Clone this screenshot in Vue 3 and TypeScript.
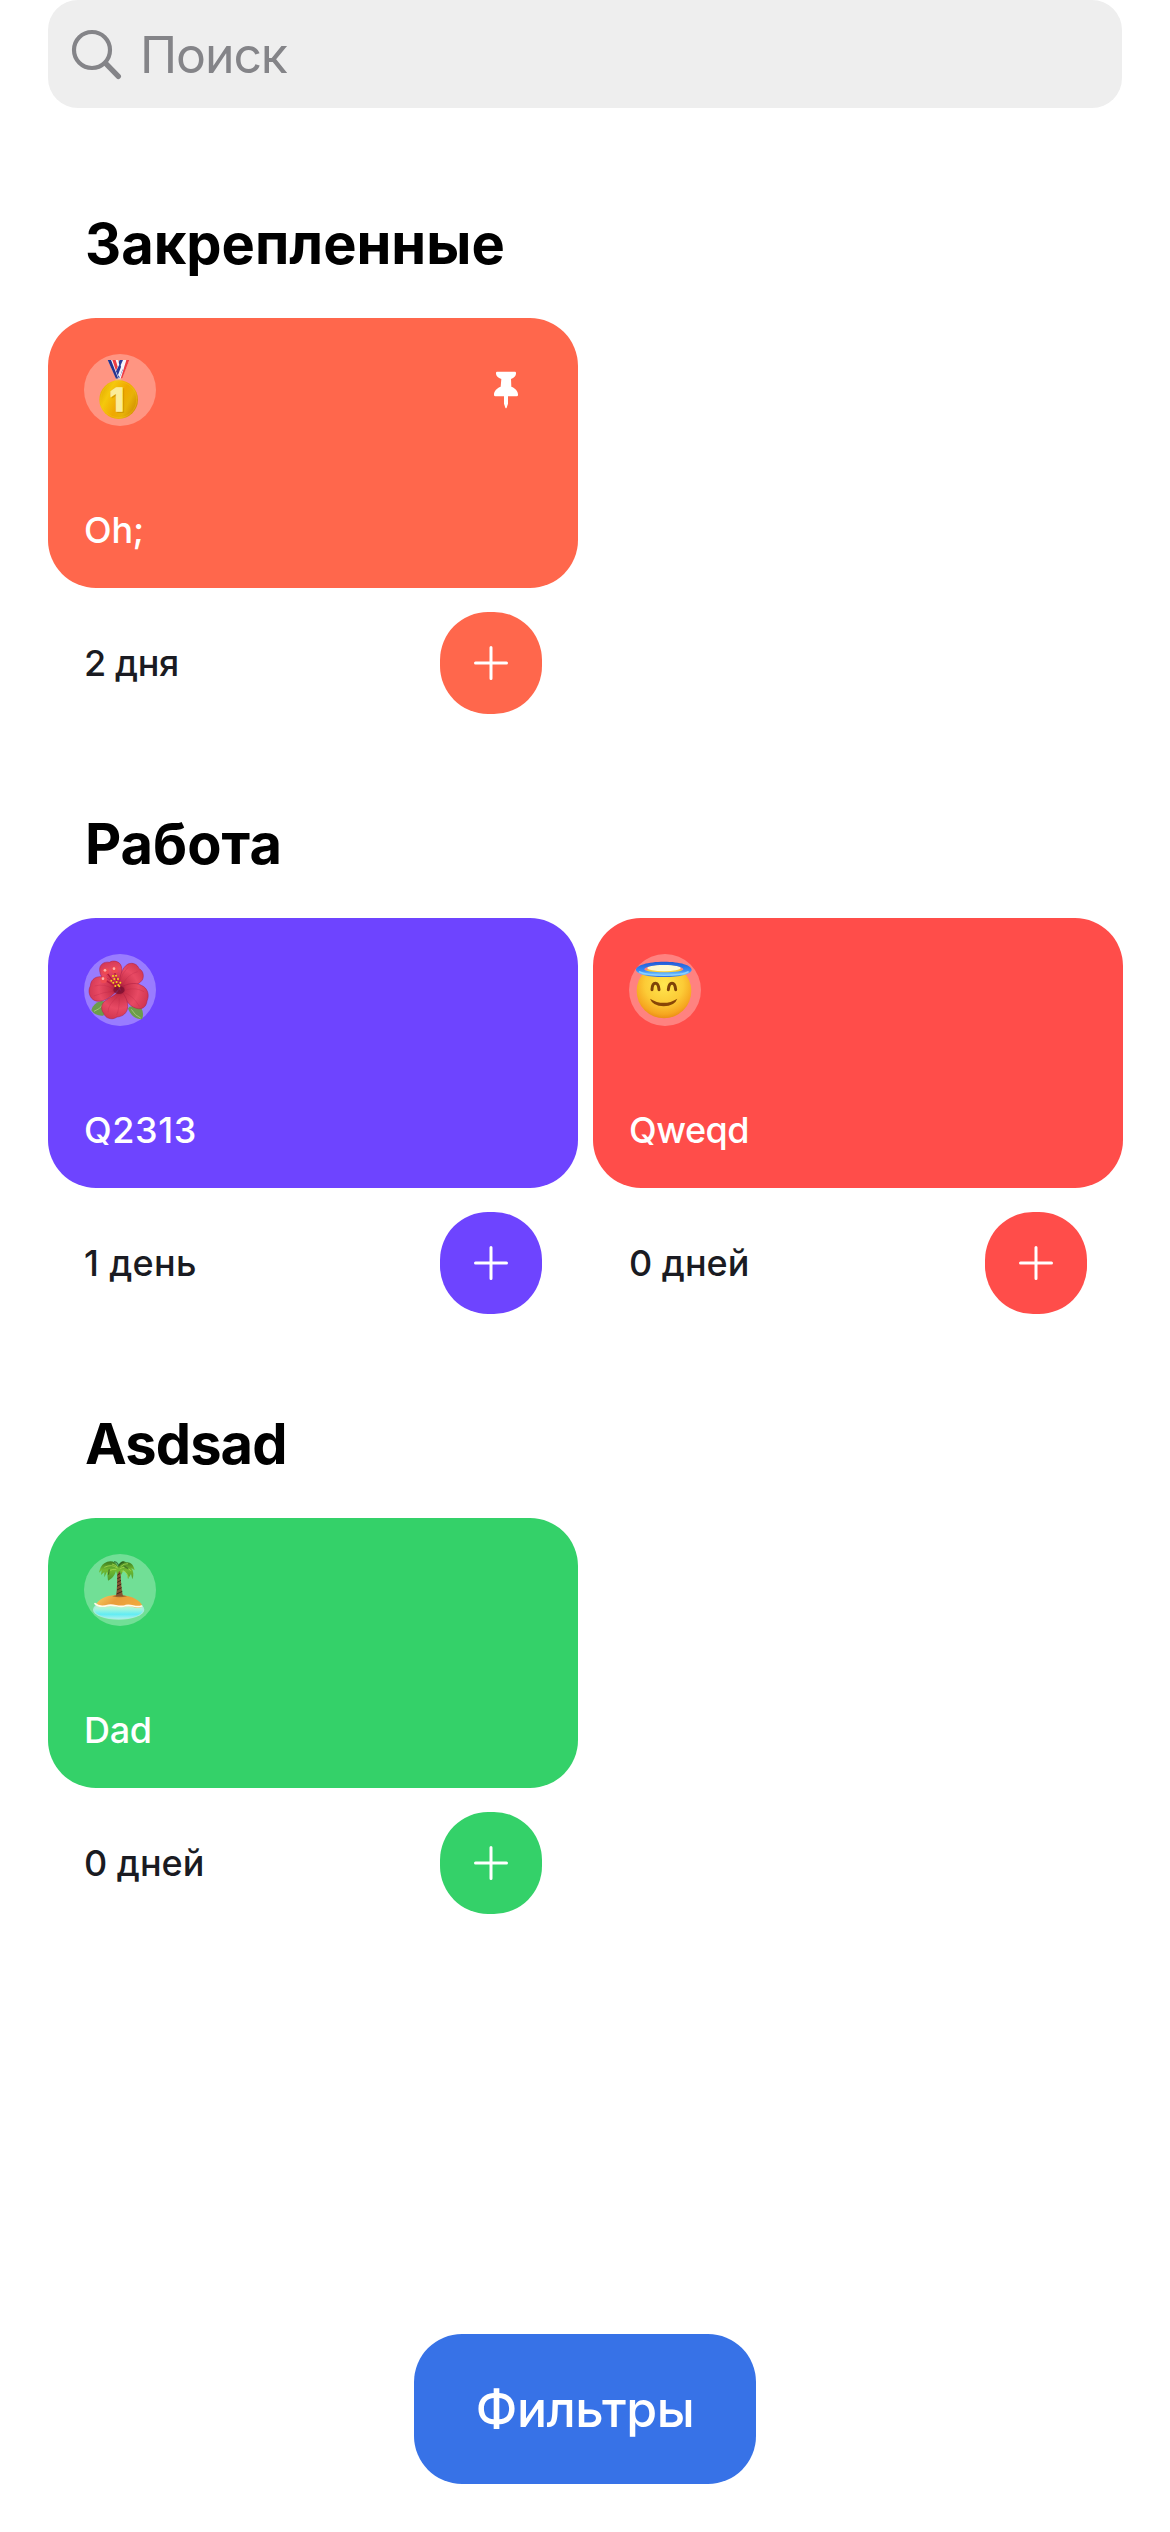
<script setup lang="ts">
type EmojiName = 'medal' | 'flower' | 'angel' | 'island'

interface Habit {
  title: string
  days: string
  color: string
  emoji: EmojiName
  pinned?: boolean
  titleSpacing: number
  daysSpacing: number
}

interface Group {
  name: string
  spacing: number
  habits: Habit[]
}

const groups: Group[] = [
  {
    name: 'Закрепленные',
    spacing: 0,
    habits: [
      { title: 'Oh;', days: '2 дня', color: '#ff674c', emoji: 'medal', pinned: true, titleSpacing: -0.2, daysSpacing: -0.4 },
    ],
  },
  {
    name: 'Работа',
    spacing: 0,
    habits: [
      { title: 'Q2313', days: '1 день', color: '#6e44ff', emoji: 'flower', titleSpacing: 0.6, daysSpacing: 0.3 },
      { title: 'Qweqd', days: '0 дней', color: '#ff4d4a', emoji: 'angel', titleSpacing: -0.5, daysSpacing: 0 },
    ],
  },
  {
    name: 'Asdsad',
    spacing: -0.9,
    habits: [
      { title: 'Dad', days: '0 дней', color: '#34d169', emoji: 'island', titleSpacing: -0.3, daysSpacing: 0 },
    ],
  },
]
</script>

<template>
  <main class="screen">
    <div class="search">
      <svg class="search-icon" viewBox="210 84 156 156" fill="none" stroke="#848488" stroke-linecap="round">
        <circle cx="276" cy="150" r="54" stroke-width="12.5" />
        <path d="M317 190 355 229" stroke-width="16" />
      </svg>
      <span class="search-text">Поиск</span>
    </div>

    <div class="groups">
      <section v-for="group in groups" :key="group.name">
        <h2 :style="{ letterSpacing: group.spacing + 'px' }">{{ group.name }}</h2>
        <div class="row">
          <article v-for="habit in group.habits" :key="habit.title" class="habit">
            <div class="card" :style="{ backgroundColor: habit.color }">
              <div class="card-top">
                <div class="emoji">
                  <svg v-if="habit.emoji === 'medal'" viewBox="42 42 216 216">
                    <defs>
                      <linearGradient id="gold" x1="0" y1="0.2" x2="1" y2="0.7">
                        <stop offset="0" stop-color="#e0a800" />
                        <stop offset="0.25" stop-color="#f5c80c" />
                        <stop offset="0.55" stop-color="#f0a800" />
                        <stop offset="0.75" stop-color="#e8b208" />
                        <stop offset="1" stop-color="#cf8c00" />
                      </linearGradient>
                    </defs>
                    <path d="M149 60h29l-21 52-8 6-11-6z" fill="#f6f4fa" />
                    <path d="M169 60h9l-20 52-6 4z" fill="#ee3b42" />
                    <path d="M149 60h10l-19 42-5-9z" fill="#2b3a98" />
                    <path d="M113 60h31l4 14 10 18-9 25h-10z" fill="#f6f4fa" />
                    <path d="M113 60h10l22 56h-7z" fill="#26348f" />
                    <path d="M127 60h10l6 20-5 12z" fill="#ee3b42" />
                    <path d="M149 72l9 18-11 26-9-22z" fill="#2b3a98" />
                    <path d="M160 62h7l-18 50-5-7z" fill="#f6f4fa" />
                    <path d="M134 119q11-7 22 0l-4 5h-14z" fill="#eeb489" />
                    <circle cx="146" cy="179" r="58" fill="url(#gold)" />
                    <circle cx="146" cy="179" r="54" fill="none" stroke="#f2c51d" stroke-width="2" opacity=".6" />
                    <text x="144" y="215" class="medal-num" text-anchor="middle" fill="#b77b00" stroke="#b77b00" stroke-width="4" opacity=".5">1</text>
                    <text x="141" y="212" class="medal-num" text-anchor="middle" fill="#fbec9a" stroke="#fbec9a" stroke-width="4">1</text>
                  </svg>

                  <svg v-else-if="habit.emoji === 'flower'" viewBox="42 42 216 216">
                    <defs>
                      <radialGradient id="petal" gradientUnits="userSpaceOnUse" cx="146" cy="146" r="96">
                        <stop offset="0" stop-color="#8e1235" />
                        <stop offset="0.24" stop-color="#c9304a" />
                        <stop offset="0.62" stop-color="#e84a64" />
                        <stop offset="1" stop-color="#cf3450" />
                      </radialGradient>
                    </defs>
                    <path d="M94 183q-24 5-30 28 12 18 36 16 12-20 8-42z" fill="#6c9c4b" />
                    <path d="M174 206q14 32 42 32 7-18-2-34-18-8-36-4z" fill="#6c9c4b" />
                    <path d="M72 214q18-6 28-22M184 208q12 20 28 26" fill="none" stroke="#a3c477" stroke-width="3" />
                    <g fill="url(#petal)" stroke="#aa1e43" stroke-width="1.5">
                      <path d="M146 143C118 136 92 120 89 92c-2-19 14-28 29-25 12-8 32-3 36 12 5 17-2 40-8 64z" />
                      <path d="M146 143c2-28 8-60 28-71 16-6 29 2 33 14 13 5 16 23 10 34-14 19-43 22-71 23z" />
                      <path d="M146 147C123 172 98 190 75 182c-16-6-23-29-14-44 1-22 20-31 37-27 22 3 36 19 48 36z" />
                      <path d="M150 144c20-14 48-18 64-8 20 8 25 30 17 47-2 19-16 27-32 22-25-7-39-35-49-61z" />
                      <path d="M147 148c18 14 30 38 25 60-5 16-18 22-31 23-15 11-35 4-40-11-11-15-6-32 8-40 14-11 29-12 38-32z" />
                    </g>
                    <g fill="none" stroke="#b82246" stroke-width="2" opacity=".4">
                      <path d="M134 153q-34 3-63 15M132 149q-28-20-58-11M142 171q-28 23-28 46M148 175q0 32-8 50M162 158q27 8 46 41M166 150q32-9 56 5M160 130q15-28 43-35M150 122q6-22 24-40M132 125q-25-15-30-34" />
                    </g>
                    <path d="M146 146 111 99M146 146l-13-54M146 146l-42-27" fill="none" stroke="#b51b3d" stroke-width="4" />
                    <ellipse cx="147" cy="150" rx="17" ry="12" fill="#760d2d" opacity=".7" />
                    <g fill="#ed4952">
                      <circle cx="107" cy="94" r="10" />
                      <circle cx="134" cy="89" r="10" />
                      <circle cx="101" cy="119" r="10" />
                    </g>
                    <g fill="#ffb2ac">
                      <circle cx="105" cy="91" r="4" />
                      <circle cx="132" cy="86" r="4" />
                      <circle cx="99" cy="116" r="4" />
                    </g>
                    <g fill="#f6d51d">
                      <circle cx="129" cy="108" r="3" /><circle cx="138" cy="107" r="3" />
                      <circle cx="124" cy="122" r="3" /><circle cx="133" cy="117" r="3" />
                      <circle cx="144" cy="117" r="3" /><circle cx="130" cy="128" r="3" />
                      <circle cx="140" cy="126" r="3" /><circle cx="151" cy="128" r="3" />
                      <circle cx="136" cy="138" r="3" /><circle cx="145" cy="135" r="3" />
                      <circle cx="148" cy="139" r="3" />
                    </g>
                  </svg>

                  <svg v-else-if="habit.emoji === 'angel'" viewBox="42 42 216 216">
                    <defs>
                      <radialGradient id="face" cx=".5" cy=".38" r=".64">
                        <stop offset="0" stop-color="#ffe64f" />
                        <stop offset="0.55" stop-color="#fccb36" />
                        <stop offset="0.85" stop-color="#f6a620" />
                        <stop offset="1" stop-color="#e88812" />
                      </radialGradient>
                      <linearGradient id="halo" x1="0" y1="0" x2="0" y2="1">
                        <stop offset="0" stop-color="#1f58d6" />
                        <stop offset="0.6" stop-color="#3b8cf4" />
                        <stop offset="0.82" stop-color="#70c2ff" />
                        <stop offset="1" stop-color="#2563df" />
                      </linearGradient>
                    </defs>
                    <circle cx="147" cy="153" r="82" fill="url(#face)" />
                    <ellipse cx="147" cy="84" rx="50" ry="10" fill="#fff9cf" />
                    <path
                      fill="url(#halo)" fill-rule="evenodd"
                      d="M63 89c0-13 35-24 84-24s83 11 83 24-34 22-83 22-84-9-84-22zm25-1c0 6 25 9 59 9s58-3 58-9c0-7-25-13-58-13s-59 6-59 13z"
                    />
                    <path d="M72 95q20 11 75 11t74-11" fill="none" stroke="#8bd0ff" stroke-width="4" />
                    <g fill="none" stroke="#7e4208" stroke-width="9" stroke-linecap="round">
                      <path d="M111 149c1-26 19-26 21 0M160 149c2-26 20-26 22 0" />
                    </g>
                    <path d="M105 176q41 25 82 0-8 22-41 23-33-1-41-23z" fill="#884606" />
                  </svg>

                  <svg v-else viewBox="42 42 216 216">
                    <defs>
                      <linearGradient id="water" x1="0" y1="0" x2="0" y2="1">
                        <stop offset="0" stop-color="#e8f3ae" />
                        <stop offset="0.45" stop-color="#a4f5dc" />
                        <stop offset="0.75" stop-color="#63ecf4" />
                        <stop offset="1" stop-color="#a8f1ee" />
                      </linearGradient>
                      <linearGradient id="sand" x1="0" y1="0" x2="1" y2="0.3">
                        <stop offset="0" stop-color="#f7cf67" />
                        <stop offset="0.5" stop-color="#e99d3c" />
                        <stop offset="1" stop-color="#efa83c" />
                      </linearGradient>
                      <linearGradient id="leaf" x1="0" y1="0" x2="0" y2="1">
                        <stop offset="0" stop-color="#3a7a20" />
                        <stop offset="0.45" stop-color="#72bb32" />
                        <stop offset="1" stop-color="#4a9a2e" />
                      </linearGradient>
                    </defs>
                    <ellipse cx="146" cy="209" rx="77" ry="30" fill="#a9eadc" />
                    <ellipse cx="146" cy="210" rx="73" ry="26" fill="url(#water)" />
                    <path d="M78 193c15-22 37-28 68-28s58 11 69 28v8c-19 8-30-7-48-2-20 7-35-6-52-1-18 6-29 3-37-5z" fill="url(#sand)" />
                    <path d="M75 191c9 9 25 9 40 5 18-4 31 8 52 1 18-5 29 8 48 1" fill="none" stroke="#fffbea" stroke-width="5" stroke-linecap="round" />
                    <path d="M127 169q20-8 44 0-21 6-44 0z" fill="#8a5320" opacity=".7" />
                    <path d="M141 92h11c0 28 2 56 7 77h-21c4-24 4-52 3-77z" fill="#855531" />
                    <path d="M142 105l9-5M142 116l10-5M142 127l11-6M141 139l13-7M141 150l14-7M140 162l17-8" stroke="#40291b" stroke-width="3" />
                    <path
                      fill="url(#leaf)"
                      d="M144 80c-8-18-26-20-41-10-8 5-14 16-16 28l8-7-2 14 10-9 0 16 8-17 3 27c14-7 20-16 24-29l4 12 6-13 6 12 6-13c8 5 13 13 14 26l9-15 4 16c5-13 4-24-3-34l10 7c-3-17-13-26-26-24-8-8-19-2-24 13z"
                    />
                    <path d="M103 82q23-11 38 2M111 104q5-18 28-16M149 86q20-10 33 6M155 93q16 0 20 20M126 72q13 2 18 14M152 80q9-10 22-9" fill="none" stroke="#a8d951" stroke-width="3" opacity=".8" />
                    <path d="M132 65q12 2 14 14 3-10 15-13M118 88l-3 16M163 80l12 6" fill="none" stroke="#21501b" stroke-width="4" opacity=".65" />
                  </svg>
                </div>
                <svg v-if="habit.pinned" class="pin" viewBox="30 12 216 216" fill="#fff">
                  <path d="M111 65h54q3 0 3 4v2c0 6-6 12-15 16l1 23c11 4 20 13 20 23v2q0 4-4 4h-26v22l-4 12q-2 4-4 0l-4-12v-22h-26q-4 0-4-4v-2c0-10 9-19 20-23l2-23c-10-4-16-10-16-16v-2q0-4 3-4z" />
                </svg>
              </div>
              <span class="label" :style="{ letterSpacing: habit.titleSpacing + 'px' }">{{ habit.title }}</span>
            </div>
            <div class="foot">
              <span class="label days" :style="{ letterSpacing: habit.daysSpacing + 'px' }">{{ habit.days }}</span>
              <button class="add" :style="{ backgroundColor: habit.color }">
                <svg viewBox="0 0 34 34" stroke="#fff" stroke-width="3" stroke-linecap="round">
                  <path d="M1.5 17h31M17 1.5v31" />
                </svg>
              </button>
            </div>
          </article>
        </div>
      </section>
    </div>

    <button class="filters">Фильтры</button>
  </main>
</template>

<style>
body {
  margin: 0;
  background: #fff;
}
</style>

<style scoped>
.screen {
  display: flex;
  flex-direction: column;
  box-sizing: border-box;
  width: 1170px;
  height: 2532px;
  padding: 0 48px 48px;
  font-family: Inter, 'Liberation Sans', sans-serif;
  overflow: hidden;
}

button {
  border: 0;
  padding: 0;
  font: inherit;
}

.search {
  display: flex;
  align-items: center;
  box-sizing: border-box;
  width: 1074px;
  height: 108px;
  flex: none;
  padding-left: 22px;
  border-radius: 30px;
  background: #eee;
}

.search-icon {
  width: 52px;
  height: 52px;
}

.search-text {
  margin-left: 18px;
  padding-top: 2px;
  color: #848488;
  font-size: 50px;
  letter-spacing: -1.1px;
  line-height: 60px;
}

.groups {
  display: flex;
  flex-direction: column;
  gap: 96px;
  padding-top: 102px;
}

h2 {
  margin: 0 0 40px;
  padding-left: 37px;
  color: #000;
  font-size: 56px;
  font-weight: 700;
  line-height: 68px;
}

.row {
  display: flex;
  gap: 15px;
  margin-right: -1px;
}

.habit {
  width: 530px;
}

.card {
  display: flex;
  flex-direction: column;
  justify-content: space-between;
  box-sizing: border-box;
  height: 270px;
  padding: 36px;
  border-radius: 48px;
}

.card-top {
  display: flex;
  justify-content: space-between;
}

.emoji {
  width: 72px;
  height: 72px;
  border-radius: 50%;
  background: rgba(255, 255, 255, 0.3);
}

.emoji svg,
.pin,
.add svg {
  display: block;
}

.pin {
  width: 72px;
  height: 72px;
}

.medal-num {
  font-size: 94px;
  font-weight: 800;
}

.label {
  color: #fff;
  font-size: 36px;
  font-weight: 500;
  line-height: 44px;
  white-space: nowrap;
}

.foot {
  display: flex;
  align-items: center;
  justify-content: space-between;
  height: 102px;
  margin-top: 24px;
  padding: 0 36px;
}

.days {
  color: #1a1b22;
}

.add {
  display: flex;
  align-items: center;
  justify-content: center;
  width: 102px;
  height: 102px;
  border-radius: 48px;
}

.add svg {
  width: 34px;
  height: 34px;
}

.filters {
  align-self: center;
  width: 342px;
  height: 150px;
  flex: none;
  margin-top: auto;
  border-radius: 48px;
  background: #3772e7;
  color: #fff;
  font-size: 50px;
  font-weight: 500;
  letter-spacing: -0.5px;
  line-height: 60px;
}
</style>
